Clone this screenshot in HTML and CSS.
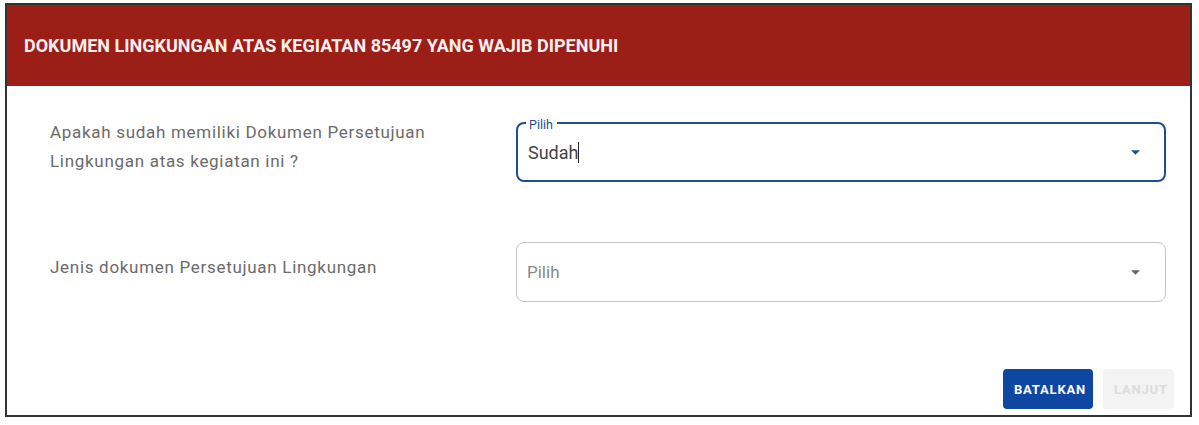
FILE: index.html
```html
<!DOCTYPE html>
<html lang="en">
<head>
  <meta charset="UTF-8">
  <meta name="viewport" content="width=device-width, initial-scale=1.0">
  <title>Dokumen Lingkungan</title>
  <link rel="stylesheet" href="styles.css">
</head>
<body>
  <div class="card">
    <div class="card-header">
      <h2>DOKUMEN LINGKUNGAN ATAS KEGIATAN 85497 YANG WAJIB DIPENUHI</h2>
    </div>

    <div class="card-body">
      <div class="form-row first">
        <div class="question">Apakah sudah memiliki Dokumen Persetujuan<br>Lingkungan atas kegiatan ini ?</div>
        <div class="select focused">
          <span class="float-label">Pilih</span>
          <span class="value">Sudah<span class="caret"></span></span>
          <svg class="arrow" width="9" height="5" viewBox="0 0 10 5"><path d="M0 0 L10 0 L5 5 Z"/></svg>
        </div>
      </div>

      <div class="form-row">
        <div class="question">Jenis dokumen Persetujuan Lingkungan</div>
        <div class="select">
          <span class="value placeholder">Pilih</span>
          <svg class="arrow" width="9" height="5" viewBox="0 0 10 5"><path d="M0 0 L10 0 L5 5 Z"/></svg>
        </div>
      </div>

      <div class="actions">
        <button class="btn primary">BATALKAN</button>
        <button class="btn disabled" disabled>LANJUT</button>
      </div>
    </div>
  </div>
</body>
</html>
```

FILE: styles.css
```css
body {
  margin: 0;
  padding: 3px 0 0 5px;
  font-family: Roboto, 'Liberation Sans', sans-serif;
  background: #fff;
}
.card {
  width: 1187px;
  height: 414px;
  box-sizing: border-box;
  border: 2px solid #333;
  display: flex;
  flex-direction: column;
}
.card-header {
  background: #9b1f17;
  height: 81px;
  display: flex;
  align-items: center;
  padding: 0 17px;
}
.card-header h2 {
  margin: 0;
  color: #fbeeee;
  font-size: 18px;
  font-weight: 700;
}
.card-body {
  flex: 1;
  display: flex;
  flex-direction: column;
  padding: 36px 24px 6px 43px;
}
.form-row {
  display: flex;
  align-items: center;
}
.form-row + .form-row {
  margin-top: 60px;
}
.question {
  width: 466px;
  color: #6b6b6b;
  font-size: 17px;
  line-height: 29px;
  letter-spacing: 0.7px;
  margin-top: -10px;
}
.select {
  position: relative;
  flex: 1;
  height: 60px;
  box-sizing: border-box;
  border: 1px solid #c4c4c4;
  border-radius: 8px;
  display: flex;
  align-items: center;
  padding: 0 11px 0 10px;
}
.select.focused {
  border: 2px solid #1f4f8f;
  padding: 0 10px 0 10px;
}
.float-label {
  position: absolute;
  top: -6px;
  left: 8px;
  padding: 0 4px 0 3px;
  background: #fff;
  color: #1f4f8f;
  font-size: 12.5px;
  line-height: 14px;
}
.value {
  flex: 1;
  font-size: 18px;
  color: #444;
}
.value.placeholder {
  color: #888;
  font-size: 17px;
}
.caret {
  display: inline-block;
  width: 1px;
  height: 21px;
  background: #222;
  vertical-align: -4px;
}
.arrow {
  fill: #666;
  margin-right: 14px;
}
.focused .arrow {
  fill: #1f4f8f;
  margin-right: 14px;
}
.actions {
  margin-top: auto;
  display: flex;
  justify-content: flex-end;
  gap: 10px;
  margin-right: -8px;
}
.btn {
  height: 40px;
  padding: 0 11px;
  border: none;
  border-radius: 4px;
  font-family: Roboto, 'Liberation Sans', sans-serif;
  font-size: 13px;
  font-weight: 700;
  letter-spacing: 0.8px;
}
.btn.primary {
  background: #0d47a1;
  color: #fff;
  width: 90px;
}
.btn.disabled {
  background: #f3f3f3;
  color: #dcdcdc;
  width: 71px;
}
```
